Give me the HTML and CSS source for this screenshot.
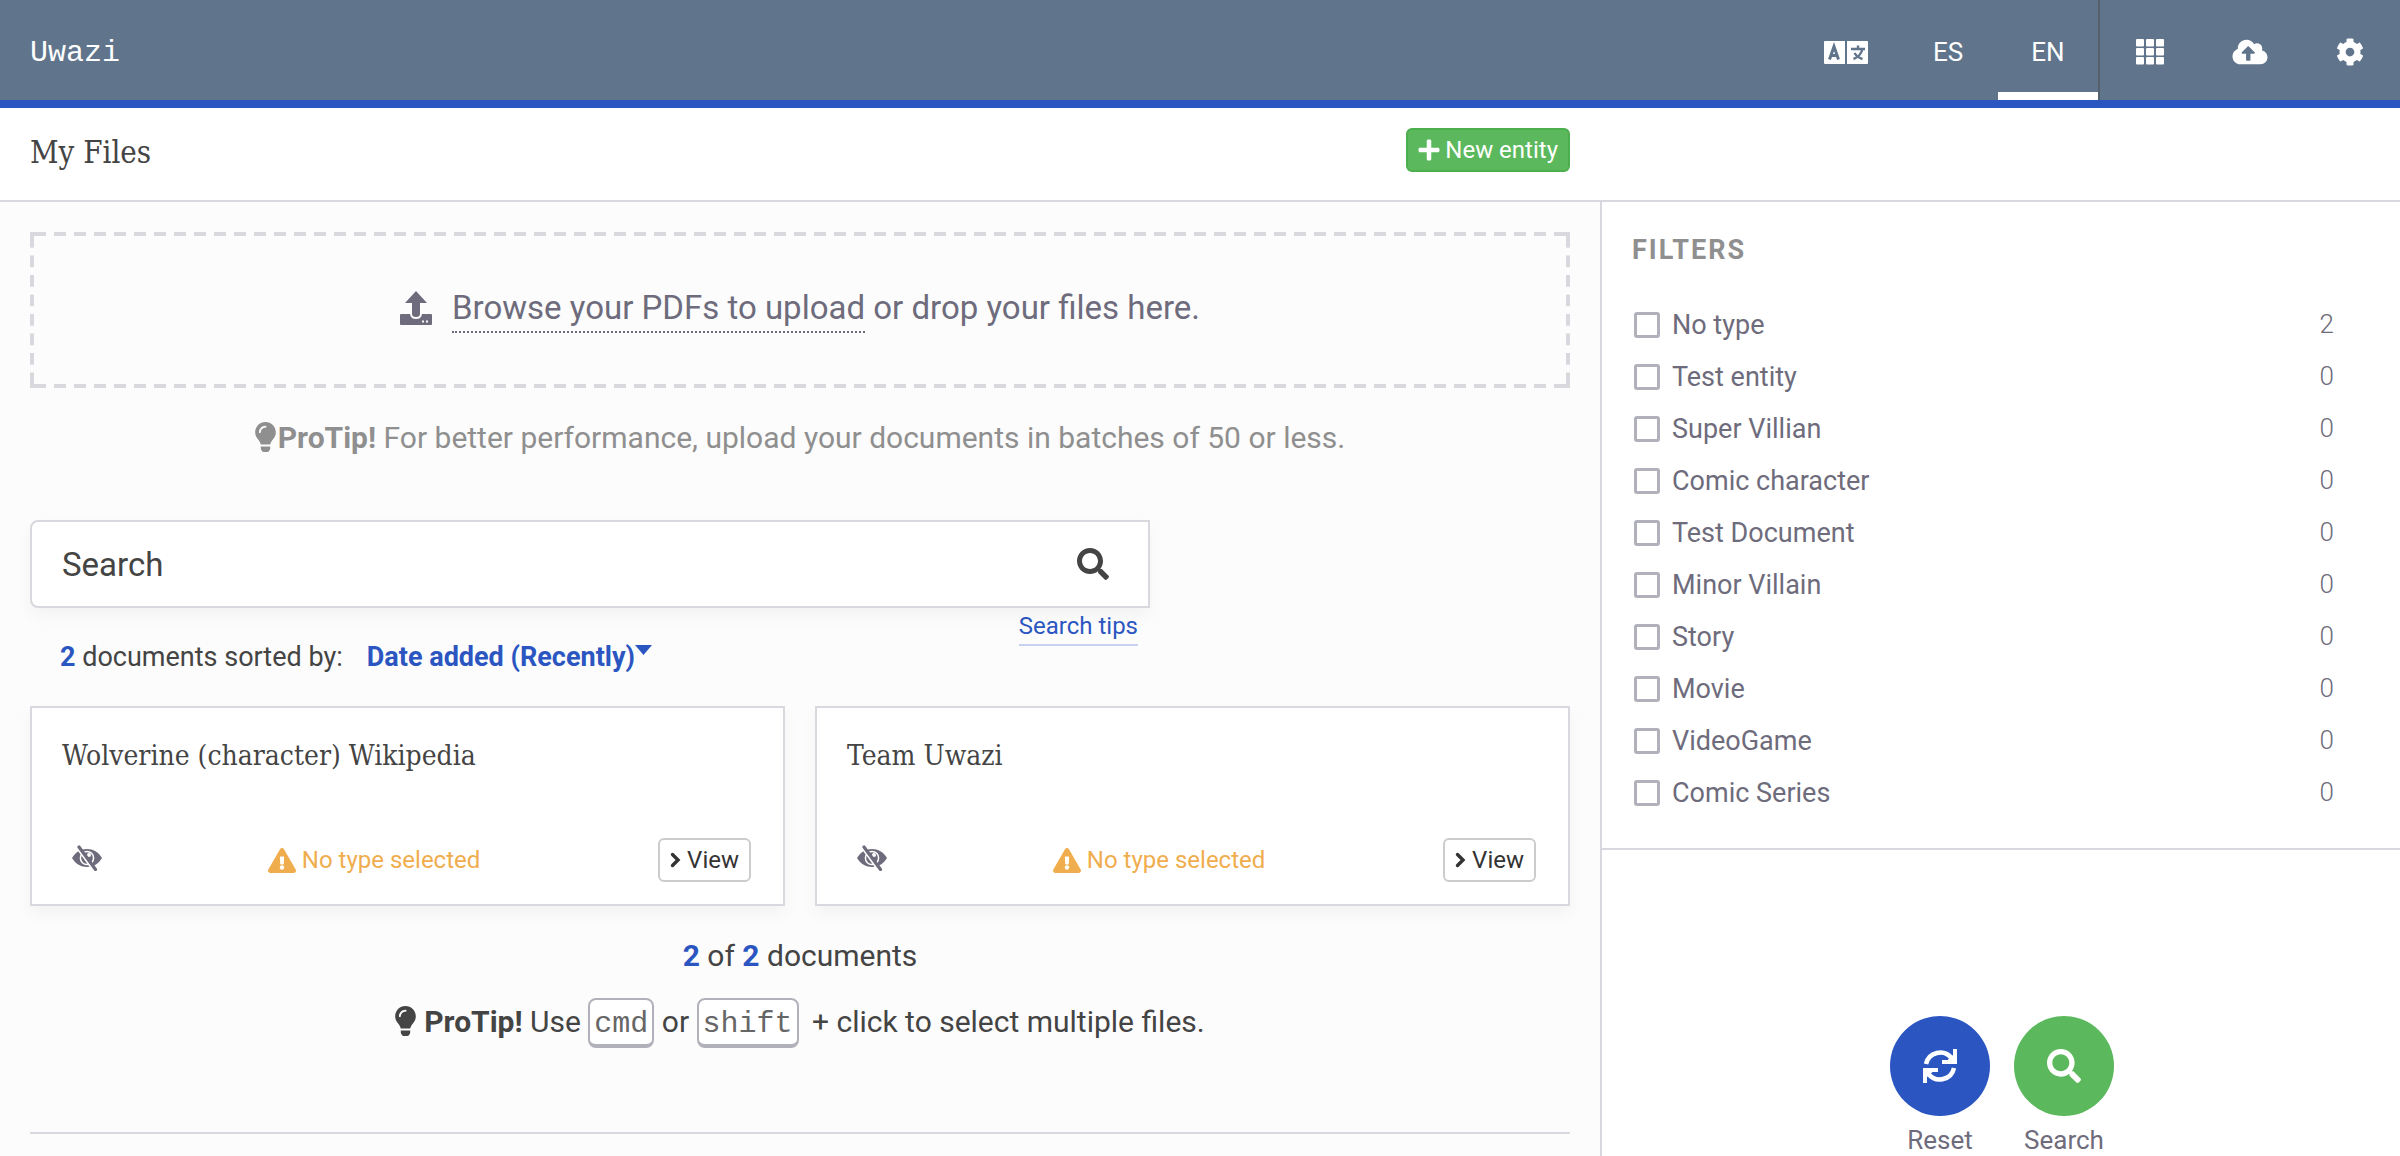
FILE: index.html
```html
<!DOCTYPE html>
<html lang="en">
<head>
<meta charset="utf-8">
<title>My Files - Uwazi</title>
<meta name="viewport" content="width=device-width, initial-scale=1">
<link rel="stylesheet" href="styles.css">
</head>
<body>
<svg class="sprite" aria-hidden="true">
  <symbol id="i-search" viewBox="0 0 512 512"><path d="M505 442.7L405.3 343c-4.5-4.5-10.6-7-17-7H372c27.6-35.3 44-79.7 44-128C416 93.1 322.9 0 208 0S0 93.1 0 208s93.1 208 208 208c48.3 0 92.7-16.4 128-44v16.3c0 6.4 2.5 12.5 7 17l99.7 99.7c9.4 9.4 24.6 9.4 33.9 0l28.3-28.3c9.4-9.4 9.4-24.6.1-34zM208 336c-70.7 0-128-57.2-128-128 0-70.7 57.2-128 128-128 70.7 0 128 57.2 128 128 0 70.7-57.2 128-128 128z"/></symbol>
  <symbol id="i-bulb" viewBox="0 0 352 512"><path d="M96.06 454.35c.01 6.29 1.87 12.45 5.36 17.69l17.09 25.69a31.99 31.99 0 0 0 26.64 14.28h61.71a31.99 31.99 0 0 0 26.64-14.28l17.09-25.69a31.989 31.989 0 0 0 5.36-17.69l.04-38.35H96.01l.05 38.35zM0 176c0 44.37 16.45 84.85 43.56 115.78 16.52 18.85 42.36 58.23 52.21 91.45.04.26.07.52.11.78h160.24c.04-.26.07-.51.11-.78 9.85-33.22 35.69-72.6 52.21-91.45C335.55 260.85 352 220.37 352 176 352 78.61 272.91-.3 175.45 0 73.44.31 0 82.97 0 176zm176-80c-44.11 0-80 35.89-80 80 0 8.84-7.16 16-16 16s-16-7.16-16-16c0-61.76 50.24-112 112-112 8.84 0 16 7.16 16 16s-7.16 16-16 16z"/></symbol>
  <symbol id="i-warning" viewBox="0 0 576 512"><path d="M569.517 440.013C587.975 472.007 564.806 512 527.94 512H48.054c-36.937 0-59.999-40.055-41.577-71.987L246.423 23.985c18.467-32.009 64.72-31.951 83.154 0l239.94 416.028zM288 354c-25.405 0-46 20.595-46 46s20.595 46 46 46 46-20.595 46-46-20.595-46-46-46zm-43.673-165.346l7.418 136c.347 6.364 5.609 11.346 11.982 11.346h48.546c6.373 0 11.635-4.982 11.982-11.346l7.418-136c.375-6.874-5.098-12.654-11.982-12.654h-63.383c-6.884 0-12.356 5.78-11.981 12.654z"/></symbol>
  <symbol id="i-chevron" viewBox="0 0 11 16"><path d="M2.500 2.500L8 8L2.500 13.500" fill="none" stroke="currentColor" stroke-width="3.400" stroke-linecap="round"/></symbol>
  <symbol id="i-hidden" viewBox="0 0 30 26">
    <path d="M0 13C3.500 7 9 4 15 4s11.500 3 15 9c-3.500 6-9 9-15 9S3.500 19 0 13z"/>
    <circle cx="15" cy="13" r="6.600" fill="none" stroke="#fff" stroke-width="1.500"/>
    <circle cx="17" cy="10" r="2" fill="#fff"/>
    <path d="M8 0L26 25" stroke="#fff" stroke-width="4" transform="translate(-3 1)"/>
    <path d="M7 2L23.500 24.500" stroke="currentColor" stroke-width="3.200" stroke-linecap="round"/>
  </symbol>
</svg>

<header class="topbar">
  <a class="brand" href="#">Uwazi</a>
  <nav class="topnav" aria-label="Main">
    <a href="#" class="nav-item nav-translate" aria-label="Live translate">
      <svg width="44" height="23" viewBox="0 0 44 23"><path fill="currentColor" d="M1 0H21V23H1Q0 23 0 22V1Q0 0 1 0zM23 0H43Q44 0 44 1V22Q44 23 43 23H23z"/><g fill="none" stroke="#60748b"><path stroke-width="3" d="M5.500 18.500L10 5.500L14.500 18.500M7 14.500H13"/><path stroke-width="2.400" d="M27 8H41M34 4.500V8M38.500 8C37.500 12 34 16.500 29.500 18M30.500 12C32 14.500 35 17 38.500 18"/></g></svg>
    </a>
    <a href="#" class="nav-item">ES</a>
    <a href="#" class="nav-item active">EN</a>
    <a href="#" class="nav-item divided" aria-label="Library">
      <svg width="28" height="26" viewBox="0 0 28 26" fill="currentColor"><rect width="8" height="7.500" rx="1"/><rect x="10" width="8" height="7.500" rx="1"/><rect x="20" width="8" height="7.500" rx="1"/><rect y="9" width="8" height="7.500" rx="1"/><rect x="10" y="9" width="8" height="7.500" rx="1"/><rect x="20" y="9" width="8" height="7.500" rx="1"/><rect y="18" width="8" height="7.500" rx="1"/><rect x="10" y="18" width="8" height="7.500" rx="1"/><rect x="20" y="18" width="8" height="7.500" rx="1"/></svg>
    </a>
    <a href="#" class="nav-item" aria-label="Uploads">
      <svg width="36" height="28" viewBox="0 0 640 512"><path fill="currentColor" d="M537.6 226.600c4.100-10.700 6.400-22.400 6.400-34.600 0-53-43-96-96-96-19.700 0-38.100 6-53.300 16.200C367 64.200 315.300 32 256 32c-88.400 0-160 71.600-160 160 0 2.700.1 5.400.2 8.100C40.200 219.800 0 273.200 0 336c0 79.500 64.500 144 144 144h368c70.700 0 128-57.300 128-128 0-61.900-44-113.600-102.400-125.400zM393.400 288H328v112c0 8.800-7.200 16-16 16h-48c-8.800 0-16-7.200-16-16V288h-65.400c-14.300 0-21.400-17.200-11.300-27.300l105.400-105.400c6.200-6.200 16.400-6.200 22.600 0l105.400 105.400c10.100 10.100 2.900 27.300-11.300 27.300z"/></svg>
    </a>
    <a href="#" class="nav-item" aria-label="Settings">
      <svg width="28" height="28" viewBox="0 0 512 512"><path fill="currentColor" d="M487.4 315.7l-42.6-24.6c4.3-23.2 4.3-47 0-70.2l42.6-24.6c4.9-2.8 7.1-8.6 5.5-14-11.1-35.6-30-67.8-54.7-94.6-3.8-4.1-10-5.1-14.8-2.3L380.8 110c-17.9-15.4-38.5-27.3-60.8-35.1V25.8c0-5.6-3.9-10.5-9.4-11.7-36.7-8.2-74.3-7.8-109.2 0-5.5 1.2-9.4 6.1-9.4 11.7V75c-22.2 7.9-42.8 19.8-60.8 35.1L88.7 85.5c-4.9-2.8-11-1.9-14.8 2.3-24.7 26.7-43.6 58.9-54.7 94.6-1.7 5.4.6 11.2 5.5 14L67.3 221c-4.3 23.2-4.3 47 0 70.2l-42.6 24.6c-4.9 2.8-7.1 8.6-5.5 14 11.1 35.6 30 67.8 54.7 94.6 3.8 4.1 10 5.1 14.8 2.3l42.6-24.6c17.9 15.4 38.5 27.3 60.8 35.1v49.2c0 5.6 3.900 10.500 9.400 11.700 36.700 8.200 74.300 7.800 109.200 0 5.500-1.200 9.400-6.100 9.400-11.700v-49.200c22.200-7.900 42.800-19.800 60.800-35.100l42.600 24.600c4.900 2.800 11 1.900 14.800-2.300 24.700-26.700 43.600-58.900 54.700-94.600 1.500-5.500-.7-11.300-5.600-14.100zM256 336c-44.100 0-80-35.900-80-80s35.900-80 80-80 80 35.900 80 80-35.900 80-80 80z"/></svg>
    </a>
  </nav>
</header>

<div class="subbar">
  <div class="subbar-main">
    <h1 class="page-title">My Files</h1>
    <button type="button" class="btn btn-new">
      <svg width="22" height="24" viewBox="0 0 448 512"><path fill="currentColor" d="M416 208H272V64c0-17.670-14.330-32-32-32h-32c-17.670 0-32 14.330-32 32v144H32c-17.670 0-32 14.330-32 32v32c0 17.670 14.330 32 32 32h144v144c0 17.670 14.330 32 32 32h32c17.670 0 32-14.330 32-32V304h144c17.670 0 32-14.330 32-32v-32c0-17.670-14.330-32-32-32z"/></svg>
      New entity
    </button>
  </div>
</div>

<div class="content">
  <main class="main">
    <div class="dropzone">
      <svg width="32" height="34" viewBox="0 0 32 34" fill="currentColor"><path d="M16 0L27 12H20V23Q20 26 16 26T12 23V12H5z"/><path d="M1 23H10Q10.500 28 16 28T22 23H31Q32 23 32 24V33Q32 34 31 34H1Q0 34 0 33V24Q0 23 1 23zM22 29.500V31.500H24V29.500zM26 29.500V31.500H28V29.500z" fill-rule="evenodd"/></svg>
      <p><a class="browse" href="#">Browse your PDFs to upload</a> or drop your files here.</p>
    </div>
    <p class="tip tip-muted"><svg class="bulb"><use href="#i-bulb"/></svg><b>ProTip!</b> For better performance, upload your documents in batches of 50 or less.</p>

    <form class="search" onsubmit="return false">
      <input class="search-input" type="text" placeholder="Search" aria-label="Search">
      <button class="search-btn" type="submit" aria-label="Search"><svg width="32" height="32"><use href="#i-search"/></svg></button>
    </form>
    <div class="meta">
      <div class="sorting">
        <span><b class="num">2</b> documents sorted by:</span>
        <button type="button" class="sort-btn">Date added (Recently)<svg width="17" height="10" viewBox="0 0 17 10"><path fill="currentColor" d="M0 0H17L8.500 10z"/></svg></button>
      </div>
      <a class="search-tips" href="#">Search tips</a>
    </div>

    <div class="cards">
      <article class="card">
        <h2 class="card-title">Wolverine (character) Wikipedia</h2>
        <div class="card-foot">
          <svg class="hidden-icon"><use href="#i-hidden"/></svg>
          <span class="no-type"><svg width="28" height="25"><use href="#i-warning"/></svg>No type selected</span>
          <button type="button" class="btn btn-view"><svg width="11" height="16"><use href="#i-chevron"/></svg>View</button>
        </div>
      </article>
      <article class="card">
        <h2 class="card-title">Team Uwazi</h2>
        <div class="card-foot">
          <svg class="hidden-icon"><use href="#i-hidden"/></svg>
          <span class="no-type"><svg width="28" height="25"><use href="#i-warning"/></svg>No type selected</span>
          <button type="button" class="btn btn-view"><svg width="11" height="16"><use href="#i-chevron"/></svg>View</button>
        </div>
      </article>
    </div>

    <p class="count"><b class="num">2</b> of <b class="num">2</b> documents</p>
    <p class="tip"><svg class="bulb bulb-spaced"><use href="#i-bulb"/></svg><b>ProTip!</b> Use <kbd>cmd</kbd> or <kbd>shift</kbd> <span class="plus">+ click to select multiple files.</span></p>
    <hr class="rule">
  </main>

  <aside class="side">
    <section class="filters">
      <h2 class="filters-title">FILTERS</h2>
      <ul class="filter-list">
        <li><label><input type="checkbox">No type</label><span class="n">2</span></li>
        <li><label><input type="checkbox">Test entity</label><span class="n">0</span></li>
        <li><label><input type="checkbox">Super Villian</label><span class="n">0</span></li>
        <li><label><input type="checkbox">Comic character</label><span class="n">0</span></li>
        <li><label><input type="checkbox">Test Document</label><span class="n">0</span></li>
        <li><label><input type="checkbox">Minor Villain</label><span class="n">0</span></li>
        <li><label><input type="checkbox">Story</label><span class="n">0</span></li>
        <li><label><input type="checkbox">Movie</label><span class="n">0</span></li>
        <li><label><input type="checkbox">VideoGame</label><span class="n">0</span></li>
        <li><label><input type="checkbox">Comic Series</label><span class="n">0</span></li>
      </ul>
    </section>
    <div class="actions">
      <button type="button" class="action">
        <span class="disc disc-blue"><svg width="34" height="34" viewBox="0 0 34 34"><path d="M3 15A14.500 14.500 0 0 1 28.500 9M31 19A14.500 14.500 0 0 1 5.500 25" fill="none" stroke="currentColor" stroke-width="4.500"/><path fill="currentColor" d="M30 0H34V15H19V11H24.500L30 6zM4 34H0V19H15V23H9.500L4 28z"/></svg></span>
        Reset
      </button>
      <button type="button" class="action">
        <span class="disc disc-green"><svg width="34" height="34"><use href="#i-search"/></svg></span>
        Search
      </button>
    </div>
  </aside>
</div>
</body>
</html>
```
FILE: styles.css
```css
* { box-sizing: border-box; }

body {
  margin: 0;
  min-height: 100vh;
  display: flex;
  flex-direction: column;
  background: #fff;
  color: #444;
  font-family: Roboto, "Liberation Sans", sans-serif;
  font-size: 30px;
  line-height: 32px;
}

h1, h2, p, ul { margin: 0; padding: 0; font-weight: 400; }
ul { list-style: none; }
a { color: inherit; text-decoration: none; }
button { font: inherit; color: inherit; padding: 0; border: 0; background: none; cursor: pointer; }
svg { fill: currentColor; flex: none; }
.sprite { display: none; }
.num { color: #2b56c1; }

/* Top bar */
.topbar {
  display: flex;
  justify-content: space-between;
  height: 108px;
  padding-left: 30px;
  background: #60748b;
  border-bottom: 8px solid #2b56c1;
  color: #fff;
}
.brand {
  align-self: center;
  padding-top: 6px;
  font-family: "Liberation Mono", monospace;
  font-size: 30px;
}
.topnav { display: flex; font-size: 26px; }
.nav-item {
  display: flex;
  align-items: center;
  justify-content: center;
  width: 100px;
  padding-top: 4px;
}
.nav-item.nav-translate { padding-right: 4px; }
.nav-item.active { border-bottom: 8px solid #fff; padding-top: 12px; }
.nav-item.divided { width: 102px; border-left: 2px solid #54606c; }

/* Title bar */
.subbar {
  height: 94px;
  border-bottom: 2px solid #d8d8de;
}
.subbar-main {
  display: flex;
  justify-content: space-between;
  align-items: flex-start;
  width: 66.6667%;
  padding: 20px 30px 0;
}
.page-title {
  font-family: "DejaVu Serif Condensed", "DejaVu Serif", serif;
  font-stretch: condensed;
  font-size: 31px;
  line-height: 48px;
}
.btn {
  display: flex;
  align-items: center;
  height: 44px;
  padding: 0 10px;
  border: 2px solid #ccc;
  border-radius: 6px;
  font-size: 24px;
}
.btn-new {
  gap: 5px;
  background: #5cb85c;
  border-color: #4cae4c;
  color: #fff;
}

/* Columns */
.content {
  flex: 1;
  display: grid;
  grid-template-columns: 2fr 1fr;
}
.main {
  min-width: 0;
  padding: 30px 30px 0;
  background: #fcfcfc;
}

.dropzone {
  --dash: #d8d8de;
  display: flex;
  align-items: center;
  justify-content: center;
  gap: 20px;
  height: 156px;
  padding-bottom: 4px;
  color: #6e6c7c;
  font-size: 33px;
  background-image:
    linear-gradient(var(--dash), var(--dash)), linear-gradient(var(--dash), var(--dash)),
    linear-gradient(var(--dash), var(--dash)), linear-gradient(var(--dash), var(--dash)),
    linear-gradient(90deg, var(--dash) 12px, transparent 12px), linear-gradient(90deg, var(--dash) 12px, transparent 12px),
    linear-gradient(var(--dash) 12px, transparent 12px), linear-gradient(var(--dash) 12px, transparent 12px);
  background-size: 4px 4px, 4px 4px, 4px 4px, 4px 4px, 20px 4px, 20px 4px, 4px 20px, 4px 20px;
  background-position: 0 0, 100% 0, 0 100%, 100% 100%, 4px 0, 4px 100%, 0 4px, 100% 4px;
  background-repeat: no-repeat, no-repeat, no-repeat, no-repeat,
    round no-repeat, round no-repeat, no-repeat round, no-repeat round;
}
.browse { padding-bottom: 4px; border-bottom: 2px dotted #6e6c7c; }

.tip { text-align: center; line-height: 52px; }
.tip-muted { margin-top: 24px; color: #8f8f8f; }
.bulb { width: 21px; height: 30px; vertical-align: -4px; margin-right: 2px; }
.bulb-spaced { margin-right: 8px; }

.search {
  display: flex;
  max-width: 1120px;
  height: 88px;
  margin-top: 56px;
  background: #fff;
  border: 2px solid #d8d8de;
  border-radius: 8px 0 0 8px;
  box-shadow: 0 8px 16px rgba(0, 0, 0, .04);
}
.search-input {
  flex: 1;
  min-width: 0;
  padding: 0 30px;
  border: 0;
  background: none;
  font: inherit;
  font-size: 33px;
}
.search-input::placeholder { color: #444; opacity: 1; }
.search-btn { width: 110px; display: flex; align-items: center; justify-content: center; }

.meta {
  display: flex;
  justify-content: space-between;
  align-items: flex-start;
  max-width: 1120px;
  padding: 0 12px 0 30px;
  font-size: 27px;
}
.sorting { display: flex; gap: 24px; margin-top: 33px; }
.sort-btn { display: flex; font-weight: 700; color: #2b56c1; }
.sort-btn svg { margin-top: 4px; }
.search-tips {
  height: 38px;
  padding-top: 2px;
  color: #2b56c1;
  border-bottom: 2px solid #c7d2f0;
  font-size: 24px;
}

/* Document cards */
.cards {
  display: grid;
  grid-template-columns: 1fr 1fr;
  gap: 30px;
  margin-top: 33px;
}
.card {
  display: flex;
  flex-direction: column;
  justify-content: space-between;
  height: 200px;
  padding: 32px 32px 22px 30px;
  background: #fff;
  border: 2px solid #d8d8de;
  box-shadow: 0 8px 16px rgba(0, 0, 0, .04);
}
.card-title {
  font-family: "DejaVu Serif Condensed", "DejaVu Serif", serif;
  font-stretch: condensed;
  font-size: 28px;
}
.card-foot { display: flex; align-items: center; justify-content: space-between; }
.hidden-icon { width: 30px; height: 26px; margin: 0 0 4px 10px; color: #6e6c7c; }
.no-type { display: flex; align-items: center; gap: 6px; margin-right: 12px; color: #f0ad4e; font-size: 24px; }
.btn-view { gap: 6px; background: #fff; color: #333; }

.count { margin-top: 34px; text-align: center; }
.count + .tip { margin-top: 24px; }
kbd {
  display: inline-block;
  height: 50px;
  padding: 0 4px;
  background: #fff;
  border: 2px solid #b1b1bb;
  border-bottom-width: 4px;
  border-radius: 8px;
  color: #666;
  font-family: "Liberation Mono", monospace;
  font-size: 30px;
  line-height: 48px;
}
.plus { padding-left: 6px; }
.rule { margin: 84px 0 0; border: 0; border-top: 2px solid #d8d8de; }

/* Filters column */
.side {
  display: flex;
  flex-direction: column;
  justify-content: space-between;
  border-left: 2px solid #d8d8de;
  color: #6e6c7c;
}
.filters { padding: 28px 66px 30px 30px; border-bottom: 2px solid #d8d8de; }
.filters-title {
  color: #8f8f8f;
  font-size: 27px;
  font-weight: 700;
  letter-spacing: 2px;
  line-height: 40px;
  margin-bottom: 28px;
}
.filter-list li { display: flex; justify-content: space-between; height: 52px; line-height: 52px; }
.filter-list label { display: flex; align-items: center; gap: 12px; padding-top: 2px; font-size: 27px; }
.filter-list input {
  appearance: none;
  width: 26px;
  height: 26px;
  margin: 0 0 0 2px;
  border: 3px solid #b1b1bb;
  border-radius: 3px;
}
.n { font-size: 26px; font-weight: 300; }

.actions { display: flex; justify-content: center; gap: 24px; padding-left: 2px; }
.action { display: flex; flex-direction: column; align-items: center; gap: 8px; width: 100px; font-size: 26px; }
.disc {
  display: flex;
  align-items: center;
  justify-content: center;
  width: 100px;
  height: 100px;
  border-radius: 50%;
  color: #fff;
}
.disc-blue { background: #2b56c1; }
.disc-green { background: #5cb85c; }
```
